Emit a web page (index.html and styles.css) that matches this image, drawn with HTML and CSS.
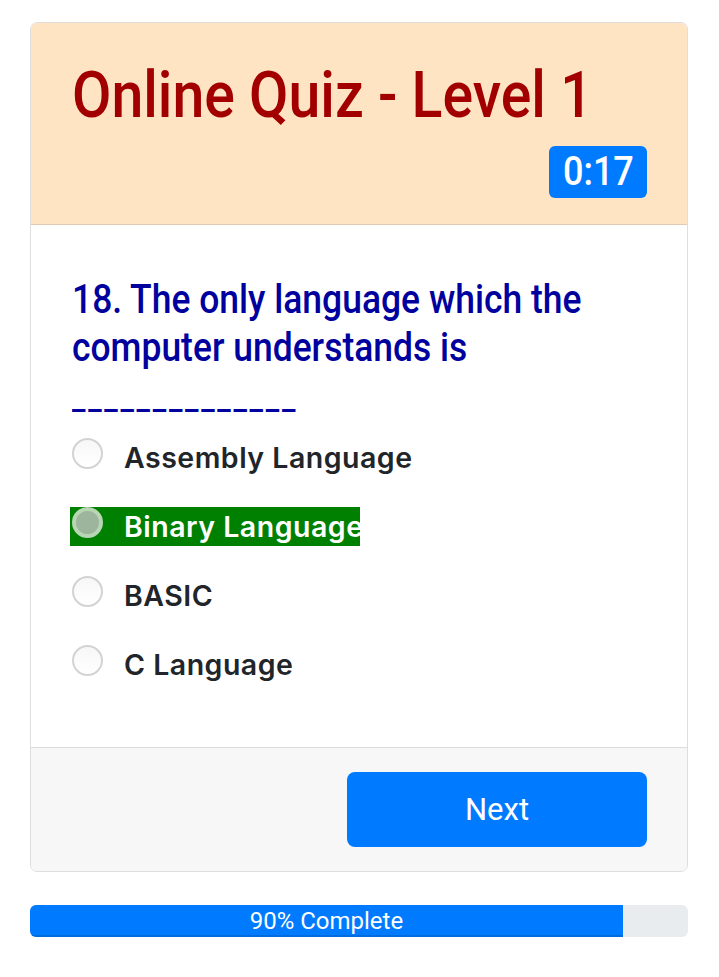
FILE: index.html
```html
<!DOCTYPE html>
<html>
<head>
<meta charset="utf-8">
<link rel="stylesheet" href="styles.css">
</head>
<body>
<div class="wrap">
  <div class="card">
    <div class="card-header">
      <h1 class="title"><span class="cond">Online Quiz - Level 1</span></h1>
      <div class="timer-row"><span class="timer"><span class="cond-badge">0:17</span></span></div>
    </div>
    <div class="card-body">
      <div class="question-box">
        <p class="question">18. The only language which the computer understands is <span class="blank">______________</span></p>
      </div>
      <div class="options">
        <div class="opt-row"><label class="opt"><span class="radio"></span><span class="opt-text">Assembly Language</span></label></div>
        <div class="opt-row"><label class="opt selected"><span class="radio checked"></span><span class="opt-text">Binary Language</span></label></div>
        <div class="opt-row"><label class="opt"><span class="radio"></span><span class="opt-text">BASIC</span></label></div>
        <div class="opt-row"><label class="opt"><span class="radio"></span><span class="opt-text">C Language</span></label></div>
      </div>
    </div>
    <div class="card-footer">
      <button class="next-btn">Next</button>
    </div>
  </div>
  <div class="progress">
    <div class="progress-bar" style="width: 90.1%">90% Complete</div>
  </div>
</div>
</body>
</html>
```
FILE: styles.css
```css
* { box-sizing: border-box; }
body {
  margin: 0;
  background: #ffffff;
  font-family: Roboto, "Liberation Sans", sans-serif;
}
.wrap {
  padding: 22px 31px 0 30px;
}
.card {
  border: 1px solid #dedede;
  border-radius: 7px;
  overflow: hidden;
  background: #fff;
}
.card-header {
  background: #ffe4c4;
  padding: 34px 40px 26px 41px;
  border-bottom: 1px solid #dccab3;
}
.title {
  margin: 0;
  font-size: 65px;
  line-height: 76.8px;
  font-weight: 500;
  color: #a20000;
  white-space: nowrap;
}
.cond {
  display: inline-block;
  transform: scaleX(0.88);
  transform-origin: left center;
}
.timer-row {
  display: flex;
  justify-content: flex-end;
  margin-top: 12px;
}
.timer {
  display: inline-flex;
  align-items: center;
  justify-content: center;
  width: 98px;
  height: 52px;
  background: #007bff;
  color: #fff;
  border-radius: 6px;
  font-size: 40px;
  font-weight: 500;
}
.cond-badge {
  display: inline-block;
  transform: scaleX(0.9);
}
.card-body {
  padding: 51px 40px 63px 41px;
  border-bottom: 1px solid #dcdcdc;
}
.question {
  margin: 0;
  width: 112.9%;
  transform: scaleX(0.886);
  transform-origin: left top;
  font-size: 40px;
  line-height: 48px;
  font-weight: 500;
  color: #00009e;
}
.blank {
  font-size: 34px;
  letter-spacing: 3px;
}
.options {
  margin-top: 17px;
}
.opt-row {
  height: 39px;
  margin-bottom: 30px;
}
.opt-row:last-child { margin-bottom: 0; }
.opt {
  display: inline-flex;
  align-items: flex-start;
  height: 39px;
  padding-left: 1px;
  margin-left: -2px;
  font-family: Inter, "Liberation Sans", Arial, sans-serif;
  font-weight: 600;
  font-size: 28.5px;
  line-height: 39px;
  letter-spacing: 0.5px;
  color: #212529;
  white-space: nowrap;
}
.opt.selected {
  background: #008000;
  color: #fff;
  width: 290px;
}
.radio {
  flex: none;
  width: 31px;
  height: 31px;
  margin-top: 0;
  margin-left: 1px;
  margin-right: 21px;
  border-radius: 50%;
  border: 2px solid #d3d3d3;
  background: linear-gradient(#f7f7f7, #ffffff);
}
.radio.checked {
  border: 4px solid #b8d6b4;
  background: #9db59c;
}
.card-footer {
  background: #f7f7f7;
  padding: 24px 40px 24px 41px;
  display: flex;
  justify-content: flex-end;
}
.next-btn {
  width: 300px;
  height: 75px;
  border: none;
  border-radius: 8px;
  background: #007bff;
  color: #fff;
  font-family: Roboto, sans-serif;
  font-size: 31px;
  font-weight: 400;
}
.progress {
  margin-top: 33px;
  height: 32px;
  background: #e9ecef;
  border-radius: 6px;
  overflow: hidden;
  display: flex;
}
.progress-bar {
  background: #007bff;
  color: #fff;
  font-size: 24px;
  line-height: 32px;
  text-align: center;
  box-shadow: inset 0 -2px 0 rgba(0,0,0,0.12);
}
```
